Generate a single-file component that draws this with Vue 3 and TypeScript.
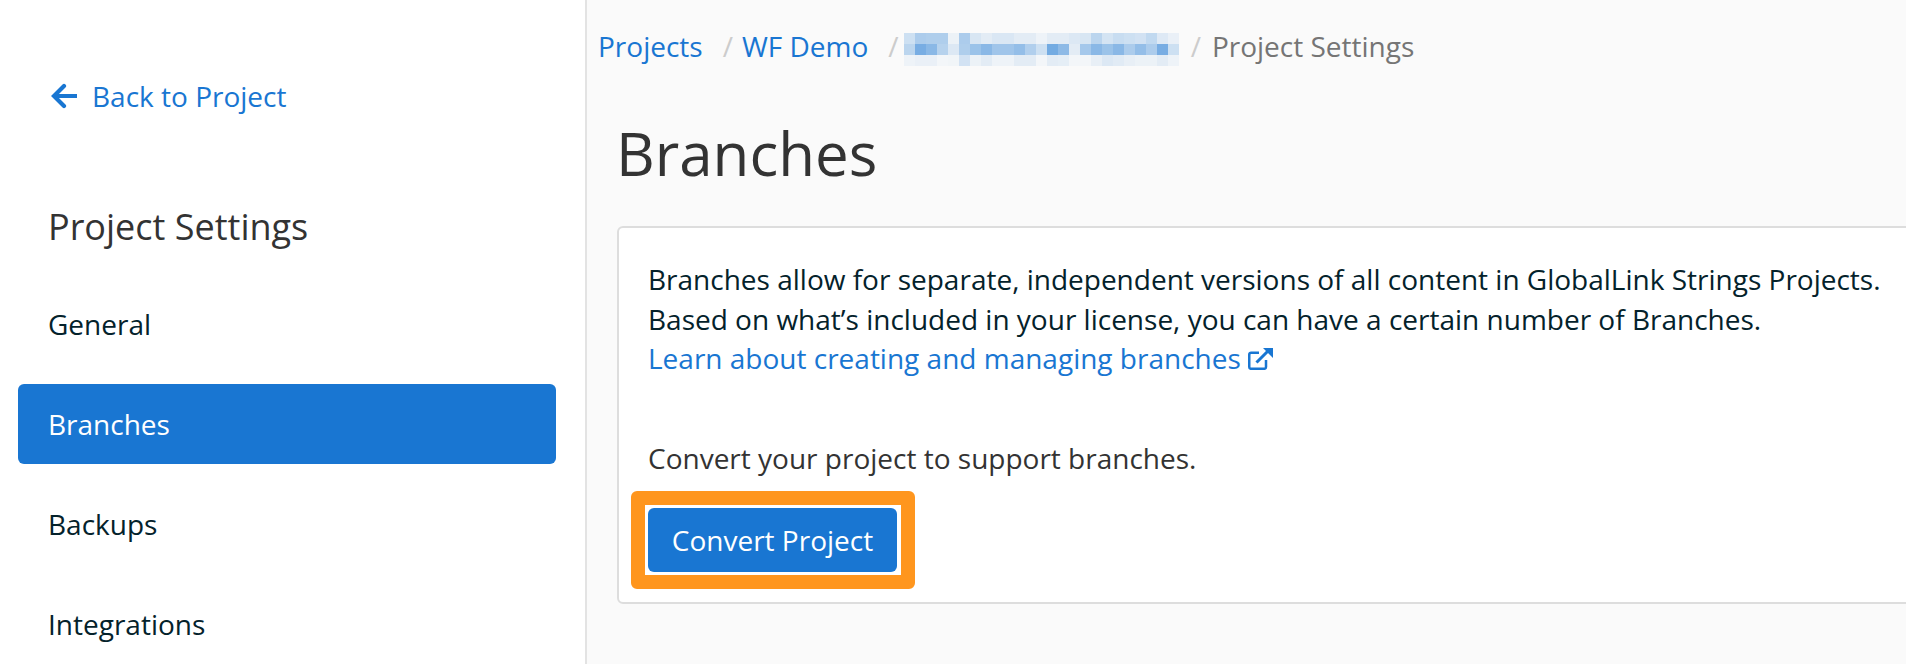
<script setup lang="ts">
const navItems = [
  { label: 'General', active: false },
  { label: 'Branches', active: true },
  { label: 'Backups', active: false },
  { label: 'Integrations', active: false },
]
const top = [20,35,33,33,6,35,15,10,14,14,10,10,5,10,10,13,15,28,17,22,20,18,25,12,7]
const mid = [28,58,50,30,13,33,42,50,40,40,45,32,20,60,48,10,38,50,42,50,35,45,35,58,20]
const bot = [5,7,7,3,4,18,6,10,5,5,10,10,3,10,9,3,3,8,13,11,8,6,6,10,5]
const cells = [...top, ...mid, ...bot].map((v) => `rgba(25,118,210,${(v / 100).toFixed(2)})`)
</script>

<template>
  <div class="page">
    <aside class="sidebar">
      <a class="back">
        <svg class="back-icon" viewBox="0 0 26 26" width="26" height="26" aria-hidden="true">
          <path d="M13 3 3 13l10 10M3.500 13H25" fill="none" stroke="#1976d2" stroke-width="4.200" stroke-linecap="round" />
        </svg>
        <span>Back to Project</span>
      </a>
      <h2 class="side-title">Project Settings</h2>
      <nav class="nav">
        <a v-for="item in navItems" :key="item.label" class="nav-item" :class="{ active: item.active }">{{ item.label }}</a>
      </nav>
    </aside>
    <main class="main">
      <div class="crumbs">
        <a class="link">Projects</a>
        <span class="sep">/</span>
        <a class="link">WF Demo</a>
        <span class="sep">/</span>
        <div class="blur"><i v-for="(c, i) in cells" :key="i" :style="{ background: c }"></i></div>
        <span class="sep">/</span>
        <span class="current">Project Settings</span>
      </div>
      <h1 class="title">Branches</h1>
      <section class="card">
        <p class="text">Branches allow for separate, independent versions of all content in GlobalLink Strings Projects.<br />Based on what’s included in your license, you can have a certain number of Branches.<br />
          <a class="link">Learn about creating and managing branches
            <svg class="ext" viewBox="0 0 25 22" width="25" height="22" aria-hidden="true">
              <path d="M18 12v7a1.800 1.800 0 0 1-1.800 1.800H3.050A1.800 1.800 0 0 1 1.250 19V6.500A1.800 1.800 0 0 1 3.050 4.700H11" fill="none" stroke="#1976d2" stroke-width="2.500" />
              <path d="M8.500 14.500 20 3" fill="none" stroke="#1976d2" stroke-width="3" />
              <path d="M15 0h10v10z" fill="#1976d2" />
            </svg>
          </a>
        </p>
        <p class="convert">Convert your project to support branches.</p>
        <div class="highlight"><button class="btn">Convert Project</button></div>
      </section>
    </main>
  </div>
</template>

<style>
html, body { margin: 0; overflow: hidden; }
</style>

<style scoped>
.page { display: flex; width: 1906px; height: 664px; overflow: hidden; font-family: "Open Sans", sans-serif; background: #fafafa; }
.sidebar { flex: 0 0 587px; box-sizing: border-box; height: 664px; padding: 75px 29px 0 18px; background: #fff; border-right: 2px solid #e3e3e3; }
.back { display: flex; align-items: center; gap: 15px; padding-left: 33px; color: #1976d2; font-size: 28px; line-height: 42px; }
.back-icon { flex: none; }
.side-title { margin: 87px 0 0 30px; font-weight: 400; font-size: 36px; line-height: 46px; color: #333; }
.nav { display: flex; flex-direction: column; gap: 20px; margin-top: 34px; }
.nav-item { display: flex; align-items: center; height: 80px; padding-left: 30px; font-size: 28px; color: #04222b; border-radius: 6px; }
.nav-item.active { background: #1976d2; color: #fff; }
.main { flex: 1; min-width: 0; padding: 26px 0 0 30px; }
.crumbs { display: flex; align-items: center; height: 40px; margin-left: -19px; font-size: 28px; white-space: nowrap; }
.link { color: #1976d2; }
.sep { color: #ccc; margin: 0 9px 0 20px; }
.current { color: #757575; margin-left: 2px; }
.blur { display: grid; grid-template-columns: repeat(25, 11px); grid-auto-rows: 11px; width: 275px; margin: 7px -8px 0 -4px; }
.blur i { display: block; }
.title { margin: 45px 0 0 -1px; font-weight: 400; font-size: 60px; line-height: 84px; color: #333; }
.card { box-sizing: border-box; width: 1400px; height: 378px; margin-top: 31px; padding: 32px 29px 0; background: #fff; border: 2px solid #ddd; border-radius: 6px; }
.text { margin: 0; font-size: 28px; line-height: 39.5px; color: #04222b; white-space: nowrap; }
.ext { vertical-align: -1px; }
.convert { margin: 59px 0 0; font-size: 28px; line-height: 40px; color: #333; }
.highlight { display: inline-flex; margin: 13px 0 0 -17px; padding: 3px 4px 3px 3px; border: 14px solid #ff961e; border-radius: 6px; background: #fff; }
.btn { width: 249px; height: 64px; padding: 0; border: 0; border-radius: 6px; background: #1976d2; color: #fff; font-family: inherit; font-size: 28px; }
</style>
